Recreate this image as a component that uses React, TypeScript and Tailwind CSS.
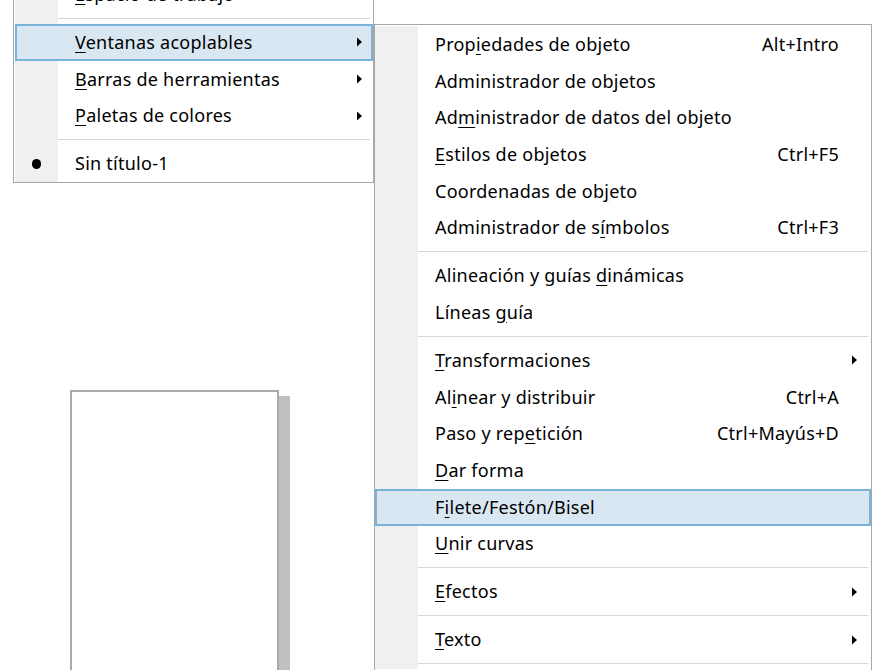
import React from "react";

type Item =
  | { sep: true }
  | {
      sep?: false;
      label: string;
      u?: number; // índice da letra sublinhada
      shortcut?: string;
      sub?: boolean;
      active?: boolean;
      bullet?: boolean;
    };

const font = { fontFamily: '"Noto Sans", "Open Sans", sans-serif' };

function Arrow() {
  return (
    <svg width="6" height="10" viewBox="0 0 6 10" className="shrink-0">
      <polygon points="0,0.5 5,5 0,9.5" fill="#000" />
    </svg>
  );
}

function Label({ text, u }: { text: string; u?: number }) {
  if (u === undefined) return <span>{text}</span>;
  return (
    <span>
      {text.slice(0, u)}
      <span className="underline underline-offset-[3px]">{text[u]}</span>
      {text.slice(u + 1)}
    </span>
  );
}

function Menu({
  items,
  iconW,
  textPad,
  padR,
  arrowR,
  sepR,
}: {
  items: Item[];
  iconW: number;
  textPad: number;
  padR: number;
  arrowR: number;
  sepR: number;
}) {
  return (
    <div className="relative">
      {/* coluna cinza dos ícones */}
      <div className="absolute top-0 bottom-0 left-0 bg-[#f0f0f0]" style={{ width: iconW }} />
      <div className="relative flex flex-col">
        {items.map((it, i) =>
          it.sep ? (
            <div key={i} className="h-[11.3px] flex items-center" style={{ paddingLeft: iconW, paddingRight: sepR }}>
              <div className="h-px w-full bg-[#d7d7d7]" />
            </div>
          ) : (
            <div
              key={i}
              className={
                "h-[36.7px] flex items-center text-[18px] tracking-[0.25px] text-black relative " +
                (it.active ? "bg-[#d9e7f3] outline-2 -outline-offset-2 outline-[#7ab3da]" : "")
              }
            >
              <div className="flex justify-center items-center" style={{ width: iconW }}>
                {it.bullet && <div className="w-[9px] h-[10px] rounded-full bg-black" />}
              </div>
              <div className="flex-1 flex items-center" style={{ paddingLeft: textPad, paddingRight: padR }}>
                <Label text={it.label} u={it.u} />
                <div className="flex-1" />
                {it.shortcut && <span>{it.shortcut}</span>}
              </div>
              {it.sub && (
                <div className="absolute top-0 bottom-0 flex items-center" style={{ right: arrowR }}>
                  <Arrow />
                </div>
              )}
            </div>
          )
        )}
      </div>
    </div>
  );
}

const leftItems: Item[] = [
  { label: "Espacio de trabajo", u: 0, sub: true },
  { sep: true },
  { label: "Ventanas acoplables", u: 0, sub: true, active: true },
  { label: "Barras de herramientas", u: 0, sub: true },
  { label: "Paletas de colores", u: 0, sub: true },
  { sep: true },
  { label: "Sin título-1", bullet: true },
];

const subItems: Item[] = [
  { label: "Propiedades de objeto", u: 4, shortcut: "Alt+Intro" },
  { label: "Administrador de objetos" },
  { label: "Administrador de datos del objeto", u: 2 },
  { label: "Estilos de objetos", u: 0, shortcut: "Ctrl+F5" },
  { label: "Coordenadas de objeto", u: 17 },
  { label: "Administrador de símbolos", u: 18, shortcut: "Ctrl+F3" },
  { sep: true },
  { label: "Alineación y guías dinámicas", u: 19 },
  { label: "Líneas guía", u: 7 },
  { sep: true },
  { label: "Transformaciones", u: 0, sub: true },
  { label: "Alinear y distribuir", u: 2, shortcut: "Ctrl+A" },
  { label: "Paso y repetición", u: 10, shortcut: "Ctrl+Mayús+D" },
  { label: "Dar forma", u: 0 },
  { label: "Filete/Festón/Bisel", u: 1, active: true },
  { label: "Unir curvas", u: 0 },
  { sep: true },
  { label: "Efectos", u: 0, sub: true },
  { sep: true },
  { label: "Texto", u: 0, sub: true },
  { sep: true },
];

export default function App() {
  return (
    <div className="relative w-[893px] h-[670px] overflow-hidden bg-white" style={font}>
      {/* página do documento */}
      <div className="absolute left-[70px] top-[390px] w-[209px] h-[300px] border-2 border-[#aaaaaa] bg-white" />
      <div className="absolute left-[279px] top-[396px] w-[11px] h-[300px] bg-[#c0c0c0]" />

      {/* menu principal */}
      <div className="absolute left-[13px] top-[-26px] w-[361px] border border-[#a8a8a8] bg-white pt-px pl-px">
        <Menu items={leftItems} iconW={43} textPad={17} padR={20} arrowR={10} sepR={3} />
      </div>

      {/* submenu */}
      <div className="absolute left-[374px] top-[24px] w-[498px] h-[700px] border border-[#a8a8a8] bg-white pt-px">
        <Menu items={subItems} iconW={43} textPad={17} padR={32} arrowR={13} sepR={3} />
      </div>
    </div>
  );
}
